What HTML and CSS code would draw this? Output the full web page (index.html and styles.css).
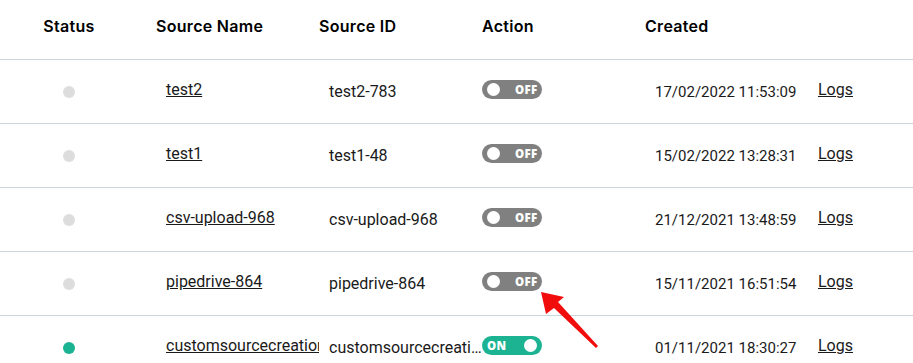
FILE: index.html
```html
<!DOCTYPE html>
<html lang="en">
<head>
    <meta charset="UTF-8">
    <title>Sources</title>
    <link rel="stylesheet" href="styles.css">
</head>
<body>
    <div class="sources">
        <div class="row head">
            <div class="cell status">Status</div>
            <div class="cell">Source Name</div>
            <div class="cell">Source ID</div>
            <div class="cell">Action</div>
            <div class="cell">Created</div>
            <div class="cell"></div>
        </div>

        <div class="row">
            <div class="cell status"><span class="dot"></span></div>
            <div class="cell name"><a href="#">test2</a></div>
            <div class="cell id">test2-783</div>
            <div class="cell"><span class="toggle">OFF</span></div>
            <div class="cell date">17/02/2022 11:53:09</div>
            <div class="cell logs"><a href="#">Logs</a></div>
        </div>

        <div class="row">
            <div class="cell status"><span class="dot"></span></div>
            <div class="cell name"><a href="#">test1</a></div>
            <div class="cell id">test1-48</div>
            <div class="cell"><span class="toggle">OFF</span></div>
            <div class="cell date">15/02/2022 13:28:31</div>
            <div class="cell logs"><a href="#">Logs</a></div>
        </div>

        <div class="row">
            <div class="cell status"><span class="dot"></span></div>
            <div class="cell name"><a href="#">csv-upload-968</a></div>
            <div class="cell id">csv-upload-968</div>
            <div class="cell"><span class="toggle">OFF</span></div>
            <div class="cell date">21/12/2021 13:48:59</div>
            <div class="cell logs"><a href="#">Logs</a></div>
        </div>

        <div class="row">
            <div class="cell status"><span class="dot"></span></div>
            <div class="cell name"><a href="#">pipedrive-864</a></div>
            <div class="cell id">pipedrive-864</div>
            <div class="cell"><span class="toggle">OFF</span></div>
            <div class="cell date">15/11/2021 16:51:54</div>
            <div class="cell logs"><a href="#">Logs</a></div>
        </div>

        <div class="row">
            <div class="cell status"><span class="dot on"></span></div>
            <div class="cell name"><a href="#">customsourcecreation-512</a></div>
            <div class="cell id">customsourcecreation-512</div>
            <div class="cell"><span class="toggle on">ON</span></div>
            <div class="cell date">01/11/2021 18:30:27</div>
            <div class="cell logs"><a href="#">Logs</a></div>
        </div>

        <!-- annotation arrow -->
        <svg class="arrow" width="70" height="70" viewBox="0 0 70 70">
            <polygon points="1,2 24,7 18,12 58,56 56,58 14,18 6,24" fill="#f20d0d"/>
        </svg>
    </div>
</body>
</html>
```

FILE: styles.css
```css
* {
    margin: 0;
    padding: 0;
    box-sizing: border-box;
}

body {
    background: white;
    font-family: Roboto, 'Liberation Sans', sans-serif;
    font-size: 16px;
    color: #1a1a1a;
    overflow: hidden;
}

.sources {
    position: relative;
    width: 913px;
}

.row {
    display: grid;
    grid-template-columns: 156px 163px 163px 163px 163px 1fr;
    height: 64px;
    border-bottom: 1px solid #c8d7db;
}

.row.head {
    height: 60px;
    padding-bottom: 7px;
    font-family: Inter, 'Noto Sans', sans-serif;
    font-weight: 600;
    font-size: 16px;
    color: #000;
    letter-spacing: 0.3px;
}

.cell {
    display: flex;
    align-items: center;
    min-width: 0;
    white-space: nowrap;
}

.cell.status {
    justify-content: center;
    padding-right: 18px;
}

.dot {
    width: 12px;
    height: 12px;
    border-radius: 50%;
    background: #dddddd;
}

.dot.on {
    background: #1cb392;
}

.name {
    padding-left: 10px;
    overflow: hidden;
}

.name a,
.logs a {
    color: #1a1a1a;
    margin-bottom: 5px;
}

.id {
    display: block;
    padding-left: 10px;
    line-height: 63px;
    overflow: hidden;
    text-overflow: ellipsis;
}

.date {
    padding-left: 10px;
    font-size: 15px;
}

.logs {
    padding-left: 10px;
}

.toggle {
    position: relative;
    width: 60px;
    height: 19px;
    margin-bottom: 5px;
    border-radius: 10px;
    background: #808080;
    color: white;
    font-family: 'Open Sans', sans-serif;
    font-weight: 800;
    font-size: 11.5px;
    line-height: 19px;
    padding-left: 33px;
    letter-spacing: 0.3px;
}

.toggle::before {
    content: '';
    position: absolute;
    left: 5px;
    top: 3px;
    width: 13px;
    height: 13px;
    border-radius: 50%;
    background: white;
}

.toggle.on {
    background: #1cb392;
    padding-left: 5px;
}

.toggle.on::before {
    left: auto;
    right: 5px;
}

.arrow {
    position: absolute;
    left: 540px;
    top: 290px;
}
```
